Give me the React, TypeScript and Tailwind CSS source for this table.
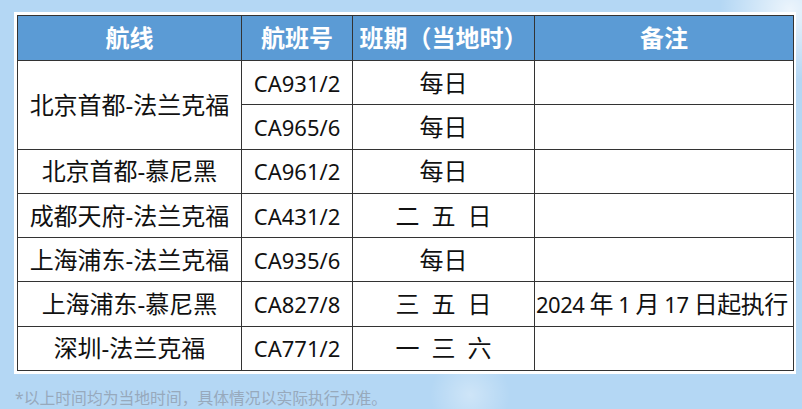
import React from "react";

const font = { fontFamily: '"Noto Sans", "Noto Sans CJK SC", sans-serif' };

type Row = { route?: string; span?: number; no: string; days: string; note?: boolean };

const rows: Row[] = [
  { route: "北京首都-法兰克福", span: 2, no: "CA931/2", days: "每日" },
  { no: "CA965/6", days: "每日" },
  { route: "北京首都-慕尼黑", span: 1, no: "CA961/2", days: "每日" },
  { route: "成都天府-法兰克福", span: 1, no: "CA431/2", days: "二 五 日" },
  { route: "上海浦东-法兰克福", span: 1, no: "CA935/6", days: "每日" },
  { route: "上海浦东-慕尼黑", span: 1, no: "CA827/8", days: "三 五 日", note: true },
  { route: "深圳-法兰克福", span: 1, no: "CA771/2", days: "一 三 六" },
];

function L({ children }: { children: React.ReactNode }) {
  return <span className="text-[22px]">{children}</span>;
}

export default function App() {
  return (
    <div
      className="w-[802px] h-[409px] overflow-hidden bg-[#b4d7f4] bg-[radial-gradient(circle_at_790px_10px,rgba(255,255,255,0.75)_0px,rgba(255,255,255,0)_70px),radial-gradient(circle_at_470px_395px,rgba(255,255,255,0.35)_0px,rgba(255,255,255,0)_40px)] pt-[12px] pl-[14px]"
      style={font}
    >
      <div className="w-[782px] bg-white p-[3px]">
        <table className="w-[776px] border-collapse table-fixed border-[1.5px] border-[#333]">
          <colgroup>
            <col className="w-[224px]" />
            <col className="w-[111px]" />
            <col className="w-[182px]" />
            <col className="w-[259px]" />
          </colgroup>
          <thead>
            <tr className="h-[45px] bg-[#5b9bd5] text-white text-[24px] font-bold leading-none">
              <th className="border border-[#333] font-bold">航线</th>
              <th className="border border-[#333] font-bold">航班号</th>
              <th className="border border-[#333] font-bold whitespace-nowrap">班期（当地时）</th>
              <th className="border border-[#333] font-bold">备注</th>
            </tr>
          </thead>
          <tbody className="text-[24px] text-[#111] leading-none font-normal">
            {rows.map((r, i) => (
              <tr key={i} className="h-[44.3px]">
                {r.route && (
                  <td rowSpan={r.span} className="border border-[#333] text-center whitespace-nowrap p-0">
                    {r.route}
                  </td>
                )}
                <td className="border border-[#333] text-center whitespace-nowrap p-0">
                  <L>{r.no}</L>
                </td>
                <td className="border border-[#333] text-center whitespace-pre p-0">
                  {r.days.replace(/ /g, "\u2002")}
                </td>
                <td className="border border-[#333] text-left whitespace-nowrap p-0 pl-[1px] tracking-[-0.5px]">
                  {r.note ? (
                    <>
                      <L>2024 </L>年<L> 1 </L>月<L> 17 </L>日起执行
                    </>
                  ) : (
                    ""
                  )}
                </td>
              </tr>
            ))}
          </tbody>
        </table>
      </div>
      <div className="mt-[14px] text-[15.8px] text-[#97a9bc] leading-[20px] pl-[1px]">
        *以上时间均为当地时间，具体情况以实际执行为准。
      </div>
    </div>
  );
}
